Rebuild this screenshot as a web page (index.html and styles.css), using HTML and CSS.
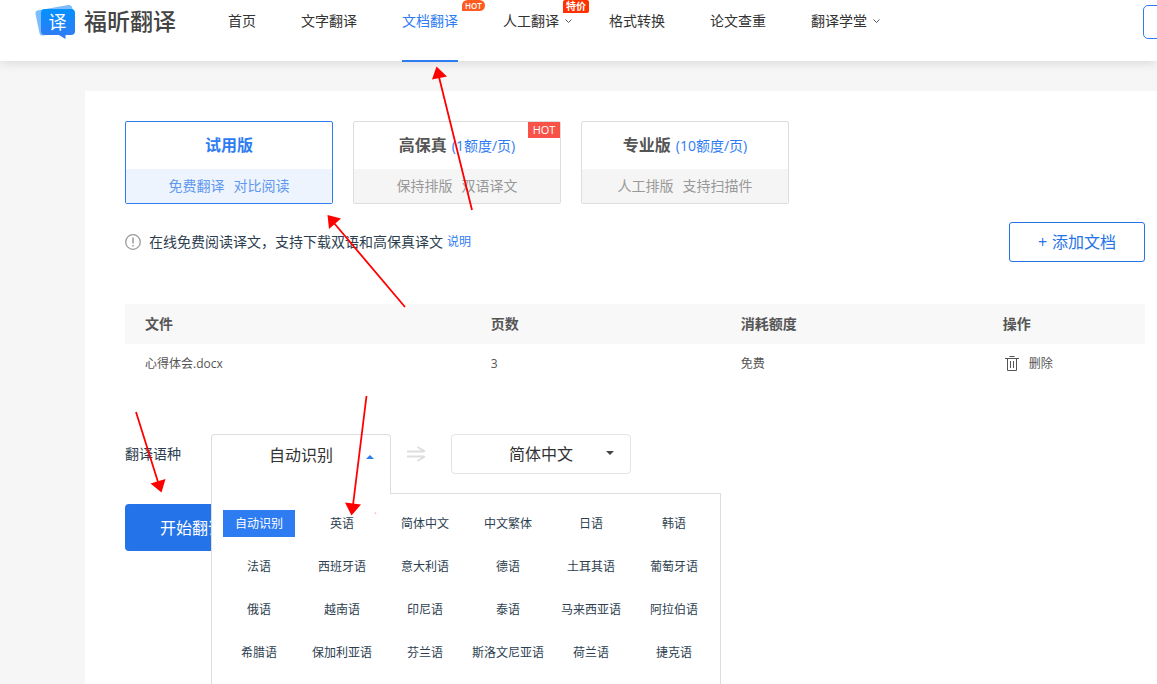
FILE: index.html
```html
<!DOCTYPE html>
<html lang="zh-CN">
<head>
<meta charset="utf-8">
<title>福昕翻译</title>
<link rel="stylesheet" href="styles.css">
</head>
<body>
<div class="page">
  <header class="header">
    <a class="logo" href="#">
      <svg class="logo-mark" width="42" height="36" viewBox="0 0 42 36" aria-hidden="true">
        <defs><linearGradient id="g" x1="0" y1="0" x2="0" y2="1"><stop offset="0" stop-color="#0391ff"/><stop offset="1" stop-color="#3579f3"/></linearGradient></defs>
        <path d="M2.500 6.500 33 1q3-.5 4 2l2 8-30 20.500H7q-2 0-2.500-2.500L.500 10q-.5-3 2-3.500z" fill="#7dbdfb"/>
        <path d="M10 5h26q4 0 4 4v18q0 4-4 4h-5.500v4L24 31H10q-4 0-4-4V9q0-4 4-4z" fill="url(#g)"/>
        <text class="logo-glyph" x="22.500" y="25" text-anchor="middle">译</text>
      </svg>
      <span class="logo-name">福昕翻译</span>
    </a>
    <nav class="nav">
      <a class="nav-link" href="#">首页</a>
      <a class="nav-link" href="#">文字翻译</a>
      <a class="nav-link nav-link-active" href="#">文档翻译<span class="flag flag-hot">HOT</span></a>
      <a class="nav-link nav-link-more" href="#">人工翻译<svg class="chevron" width="7" height="5" viewBox="0 0 7 5" aria-hidden="true"><path d="M.5.5l3 3 3-3" fill="none" stroke="#555"/></svg><span class="flag flag-sale">特价</span></a>
      <a class="nav-link" href="#">格式转换</a>
      <a class="nav-link" href="#">论文查重</a>
      <a class="nav-link nav-link-more" href="#">翻译学堂<svg class="chevron" width="7" height="5" viewBox="0 0 7 5" aria-hidden="true"><path d="M.5.5l3 3 3-3" fill="none" stroke="#555"/></svg></a>
    </nav>
    <button class="account" type="button" aria-label="登录"></button>
  </header>

  <main class="main">
    <div class="plans">
      <button class="plan plan-active" type="button">
        <span class="plan-title"><b>试用版</b></span>
        <span class="plan-note"><span>免费翻译</span><span>对比阅读</span></span>
      </button>
      <button class="plan" type="button">
        <span class="plan-title"><b>高保真</b><span class="plan-price">(1额度/页)</span></span>
        <span class="plan-note"><span>保持排版</span><span>双语译文</span></span>
        <span class="plan-hot">HOT</span>
      </button>
      <button class="plan" type="button">
        <span class="plan-title"><b>专业版</b><span class="plan-price">(10额度/页)</span></span>
        <span class="plan-note"><span>人工排版</span><span>支持扫描件</span></span>
      </button>
    </div>

    <div class="toolbar">
      <p class="tip">
        <svg class="tip-icon" width="16" height="16" viewBox="0 0 16 16" aria-hidden="true"><circle cx="8" cy="8" r="7.300" fill="none" stroke="#999" stroke-width="1.300"/><path d="M8 3.500v6M8 11v1.500" stroke="#999" stroke-width="1.500"/></svg>
        <span>在线免费阅读译文，支持下载双语和高保真译文</span>
        <a class="tip-link" href="#">说明</a>
      </p>
      <button class="add" type="button"><span>+</span><span>添加文档</span></button>
    </div>

    <table class="files">
      <thead>
        <tr><th class="col-file">文件</th><th class="col-pages">页数</th><th class="col-cost">消耗额度</th><th>操作</th></tr>
      </thead>
      <tbody>
        <tr>
          <td>心得体会.docx</td><td>3</td><td>免费</td>
          <td><button class="delete" type="button"><svg width="14" height="16" viewBox="0 0 14 16" aria-hidden="true"><path d="M0 2.500h14M4.500.5h5M2.500 2.500v12h9v-12M5.500 5v7M8.500 5v7" fill="none" stroke="#555"/></svg>删除</button></td>
        </tr>
      </tbody>
    </table>

    <div class="languages">
      <span class="languages-label" id="lang-label">翻译语种</span>
      <div class="picker">
        <button class="picker-button" type="button" aria-haspopup="listbox" aria-expanded="true" aria-labelledby="lang-label lang-value"><span id="lang-value">自动识别</span><svg class="caret" width="8" height="4" viewBox="0 0 8 4" aria-hidden="true"><path d="M0 4l4-4 4 4z" fill="#2e7cf2"/></svg></button>
        <ul class="menu" role="listbox" aria-labelledby="lang-label">
          <li class="option option-active" role="option" aria-selected="true">自动识别</li>
          <li class="option" role="option">英语</li>
          <li class="option" role="option">简体中文</li>
          <li class="option" role="option">中文繁体</li>
          <li class="option" role="option">日语</li>
          <li class="option" role="option">韩语</li>
          <li class="option" role="option">法语</li>
          <li class="option" role="option">西班牙语</li>
          <li class="option" role="option">意大利语</li>
          <li class="option" role="option">德语</li>
          <li class="option" role="option">土耳其语</li>
          <li class="option" role="option">葡萄牙语</li>
          <li class="option" role="option">俄语</li>
          <li class="option" role="option">越南语</li>
          <li class="option" role="option">印尼语</li>
          <li class="option" role="option">泰语</li>
          <li class="option" role="option">马来西亚语</li>
          <li class="option" role="option">阿拉伯语</li>
          <li class="option" role="option">希腊语</li>
          <li class="option" role="option">保加利亚语</li>
          <li class="option" role="option">芬兰语</li>
          <li class="option" role="option">斯洛文尼亚语</li>
          <li class="option" role="option">荷兰语</li>
          <li class="option" role="option">捷克语</li>
        </ul>
      </div>
      <svg class="direction" width="19" height="16" viewBox="0 0 19 16" aria-hidden="true"><path d="M0 5.500h17M0 10.500h17M10.500 1l7.500 4.500M10.500 15l7.500-4.500" fill="none" stroke="#ddd" stroke-width="1.800"/></svg>
      <div class="target">
        <select class="target-select" aria-label="目标语言"><option>简体中文</option></select>
        <svg class="caret" width="8" height="4" viewBox="0 0 8 4" aria-hidden="true"><path d="M0 0h8L4 4z" fill="#444"/></svg>
      </div>
    </div>

    <button class="start" type="button">开始翻译</button>
  </main>

  <svg class="arrows" width="500" height="530" viewBox="0 0 500 530" aria-hidden="true">
    <g stroke="#f00" stroke-width="1.800" fill="none">
      <path d="M472 210 439 77M405 307 334 223M136 412l22 70M366.500 396 353 505"/>
    </g>
    <path d="M436.500 66.500 447 76.500 432 79.500zM327.500 215l13.500 3.500-12 10.500zM161.500 492.500l-11-9 15-4.500zM351.500 515.500 345 502.500l16 2z" fill="#f00"/>
    <path d="M375 512.500l1 1.500" stroke="#f99" stroke-width="1"/>
  </svg>
</div>
</body>
</html>
```

FILE: styles.css
```css
* {
  box-sizing: border-box;
}

body {
  margin: 0;
  background: #f6f6f6;
  color: #333;
  font: 14px/20px "Open Sans", "Noto Sans CJK SC", sans-serif;
}

button,
select {
  margin: 0;
  padding: 0;
  border: 0;
  background: none;
  color: inherit;
  font: inherit;
}

a {
  color: inherit;
  text-decoration: none;
}

.page {
  position: relative;
  display: flex;
  flex-direction: column;
  min-height: 100vh;
  overflow: hidden;
}

/* Header */
.header {
  display: flex;
  align-items: flex-start;
  height: 61px;
  padding-left: 35px;
  background: #fff;
  box-shadow: 0 0 12px rgba(0, 0, 0, 0.16);
}

.logo {
  display: flex;
  flex: none;
  gap: 7px;
  padding-top: 4px;
}

.logo-glyph {
  fill: #fff;
  font-size: 18px;
}

.logo-name {
  color: #444;
  font-size: 23px;
  font-weight: 500;
  line-height: 34px;
}

.nav {
  display: flex;
  flex: none;
  gap: 45px;
  margin-left: 52px;
}

.nav-link {
  position: relative;
  height: 62px;
  line-height: 42px;
}

.nav-link-active {
  border-bottom: 2px solid #2e7cf2;
  color: #2e7cf2;
}

.nav-link-more {
  padding-right: 5px;
}

.chevron {
  position: absolute;
  top: 19px;
  left: 62px;
}

.flag {
  position: absolute;
  top: 0;
  left: 60px;
  color: #fff;
  white-space: nowrap;
}

.flag-hot {
  padding: 0 3px;
  border-radius: 6px 6px 6px 0;
  background: #ff5a1f;
  font-size: 8px;
  font-weight: 600;
  line-height: 11px;
}

.flag-sale {
  padding: 0 3px;
  border-radius: 2px 2px 2px 0;
  background: #ff3100;
  font-size: 10px;
  font-weight: 700;
  line-height: 13px;
}

.account {
  flex: none;
  width: 80px;
  height: 34px;
  margin: 5px -66px 0 auto;
  border: 1px solid #2e7cf2;
  border-radius: 5px;
}

/* Content */
.main {
  flex: 1;
  margin: 30px 0 0 85px;
  padding: 30px 12px 30px 40px;
  background: #fff;
}

.plans {
  display: flex;
  gap: 20px;
}

.plan {
  position: relative;
  display: flex;
  flex-direction: column;
  width: 208px;
  border: 1px solid #ddd;
  border-radius: 2px;
  color: #555;
}

.plan-title,
.plan-note {
  display: flex;
  justify-content: center;
  width: 100%;
}

.plan-title {
  gap: 5px;
  font-size: 16px;
  line-height: 47px;
}

.plan-price {
  color: #2e7cf2;
  font-size: 14px;
}

.plan-note {
  gap: 9px;
  background: #f5f5f5;
  color: #999;
  line-height: 34px;
}

.plan-active {
  border-color: #2e7cf2;
  color: #2e7cf2;
}

.plan-active .plan-note {
  background: #eef4fe;
  color: #6098ee;
}

.plan-hot {
  position: absolute;
  top: 0;
  right: 0;
  width: 32px;
  background: #f95349;
  color: #fff;
  font-size: 11px;
  line-height: 16px;
}

.toolbar {
  display: flex;
  align-items: center;
  justify-content: space-between;
  margin-top: 18px;
}

.tip {
  display: flex;
  align-items: center;
  margin: 0;
  color: #2c3e50;
}

.tip-icon {
  margin-right: 8px;
}

.tip-link {
  margin-left: 4px;
  color: #2e7cf2;
  font-size: 12px;
}

.add {
  display: flex;
  align-items: center;
  justify-content: center;
  gap: 5px;
  width: 136px;
  height: 40px;
  border: 1px solid #2573e8;
  border-radius: 3px;
  color: #2573e8;
  font-size: 16px;
}

.files {
  width: 100%;
  margin-top: 42px;
  border-collapse: collapse;
  table-layout: fixed;
  color: #555;
  text-align: left;
}

.files th,
.files td {
  height: 40px;
  padding: 0 0 0 20px;
}

.files th {
  background: #f8f8f8;
}

.files td {
  font-size: 12px;
}

.col-file {
  width: 33.9%;
}

.col-pages {
  width: 24.5%;
}

.col-cost {
  width: 25.7%;
}

.delete {
  display: flex;
  align-items: center;
  gap: 10px;
  padding-left: 2px;
}

/* Languages */
.languages {
  display: flex;
  align-items: center;
  margin-top: 50px;
}

.languages-label {
  margin-right: 30px;
  color: #2c3e50;
}

.picker {
  position: relative;
  width: 180px;
  height: 40px;
}

.picker-button {
  position: relative;
  z-index: 2;
  width: 100%;
  height: 60px;
  padding-bottom: 20px;
  border: 1px solid #ddd;
  border-bottom: 0;
  border-radius: 4px 4px 0 0;
  background: #fff;
  font-size: 16px;
}

.caret {
  position: absolute;
  top: 17px;
  right: 17px;
  pointer-events: none;
}

.picker-button .caret {
  top: 20px;
  right: 16px;
}

.menu {
  position: absolute;
  z-index: 1;
  top: 59px;
  left: 0;
  display: grid;
  grid-template-columns: repeat(6, 72px);
  gap: 16px 11px;
  margin: 0;
  padding: 16px 10px 40px 11px;
  border: 1px solid #ddd;
  background: #fff;
  color: #2c3e50;
  font-size: 12px;
  line-height: 27px;
  list-style: none;
}

.option {
  text-align: center;
  white-space: nowrap;
}

.option-active {
  background: #2e7cf2;
  color: #fff;
}

.direction {
  margin: 0 25px 0 16px;
}

.target {
  position: relative;
  width: 180px;
}

.target-select {
  width: 100%;
  height: 40px;
  border: 1px solid #e4e4e4;
  border-radius: 4px;
  appearance: none;
  font-size: 16px;
  text-align: center;
  text-align-last: center;
}

.start {
  width: 134px;
  height: 47px;
  margin-top: 30px;
  border-radius: 4px;
  background: #2573e8;
  color: #fff;
  font-size: 16px;
}

/* Annotation arrows drawn over the page */
.arrows {
  position: absolute;
  z-index: 3;
  top: 0;
  left: 0;
  pointer-events: none;
}
```
